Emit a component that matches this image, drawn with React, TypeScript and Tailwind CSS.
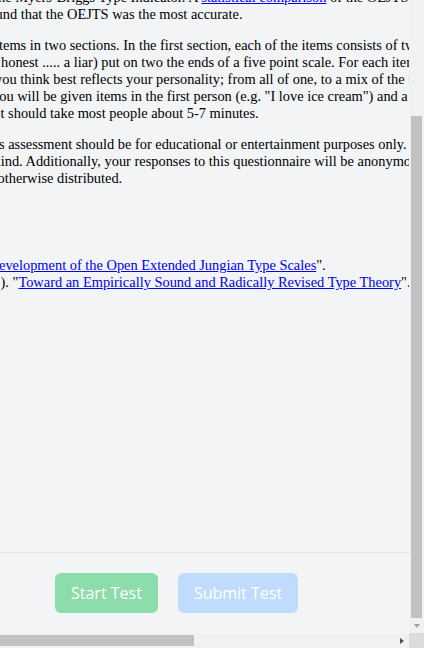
import React from 'react';

const link = 'text-[#0000ee] underline';

function Line({ className = '', children }: { className?: string; children: React.ReactNode }) {
  return <div className={`whitespace-nowrap ${className}`}>{children}</div>;
}

function VerticalScrollbar() {
  return (
    <div className="flex w-[15px] shrink-0 flex-col bg-[#f1f1f1]">
      <div className="h-[116px] shrink-0" />
      <div className="mx-[2px] flex-1 bg-[#c1c1c1]" />
      <div className="flex h-[15px] shrink-0 items-center justify-center">
        <div className="h-0 w-0 border-x-[3.5px] border-t-[4px] border-x-transparent border-t-[#a3a3a3]" />
      </div>
    </div>
  );
}

function HorizontalScrollbar() {
  return (
    <div className="flex h-[15px] shrink-0 bg-[#f1f1f1]">
      <div className="my-[2px] w-[194px] bg-[#c1c1c1]" />
      <div className="flex-1" />
      <div className="flex w-[15px] items-center justify-center">
        <div className="h-0 w-0 border-y-[3.5px] border-l-[4px] border-y-transparent border-l-[#505050]" />
      </div>
      <div className="w-[15px] bg-[#dcdcdc]" />
    </div>
  );
}

export default function App() {
  return (
    <div className="flex h-screen w-full flex-col overflow-hidden bg-[#f3f4f6]">
      <div className="flex min-h-0 flex-1">
        <div className="flex min-w-0 flex-1 flex-col overflow-hidden">
          {/* intro text, the page is scrolled so its left side is out of view */}
          <div className="-mt-[11px] flex-1 font-['Liberation_Serif',serif] text-[14.4px] leading-[17px] text-black">
            <div className="mb-[14px]">
              <Line className="-ml-[6px]">
                the Myers-Briggs Type Indicator. A <a className={link}>statistical comparison</a> of the OEJTS with other
              </Line>
              <Line className="-ml-[4.5px]">und that the OEJTS was the most accurate.</Line>
            </div>
            <div className="mb-[14px]">
              <Line className="-ml-[5px]">items in two sections. In the first section, each of the items consists of two</Line>
              <Line className="ml-[1px]">honest ..... a liar) put on two the ends of a five point scale. For each item,</Line>
              <Line className="-ml-[5px]">you think best reflects your personality; from all of one, to a mix of the two</Line>
              <Line className="-ml-[8px]">you will be given items in the first person (e.g. "I love ice cream") and a scale</Line>
              <Line className="-ml-[3.5px]">it should take most people about 5-7 minutes.</Line>
            </div>
            <div>
              <Line className="-ml-[1px]">s assessment should be for educational or entertainment purposes only.</Line>
              <Line className="-ml-[6.5px]">kind. Additionally, your responses to this questionnaire will be anonymous</Line>
              <Line className="-ml-[2.5px]">otherwise distributed.</Line>
            </div>
            <div className="mt-[70px]">
              <Line className="-ml-[1px]">
                <a className={link}>evelopment of the Open Extended Jungian Type Scales</a>".
              </Line>
              <Line className="ml-[0.5px]">
                ). "<a className={link}>Toward an Empirically Sound and Radically Revised Type Theory</a>".
              </Line>
            </div>
          </div>

          <div className="flex shrink-0 gap-5 border-t border-[#e5e7eb] py-5 pl-[55px] font-['Open_Sans',sans-serif]">
            <button className="h-10 rounded-md bg-[#8ddcab] px-4 text-base text-white">Start Test</button>
            <button className="h-10 rounded-md bg-[#bfdbfe] px-4 text-base text-white">Submit Test</button>
          </div>
        </div>
        <VerticalScrollbar />
      </div>
      <HorizontalScrollbar />
    </div>
  );
}
